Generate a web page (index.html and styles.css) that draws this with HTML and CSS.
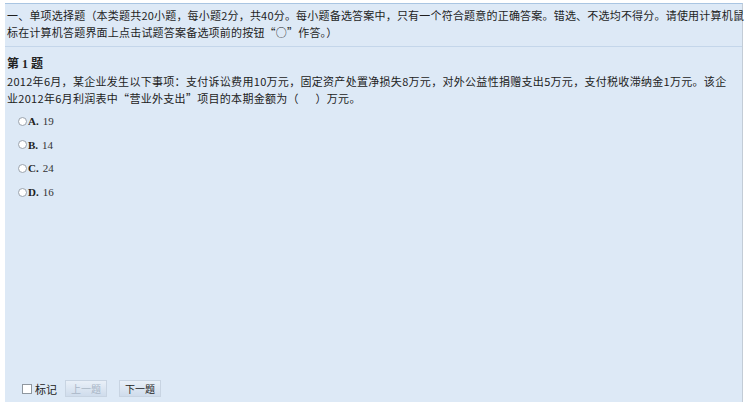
FILE: index.html
```html
<!DOCTYPE html>
<html lang="zh">
<head>
<meta charset="utf-8">
<link rel="stylesheet" href="styles.css">
</head>
<body>
<div class="panel">
  <div class="header">一、单项选择题（本类题共20小题，每小题2分，共40分。每小题备选答案中，只有一个符合题意的正确答案。错选、不选均不得分。请使用计算机鼠<br>标在计算机答题界面上点击试题答案备选项前的按钮“○”作答。）</div>
  <div class="question">
    <div class="qtitle">第<span class="num">1</span>题</div>
    <div class="qtext">2012年6月，某企业发生以下事项：支付诉讼费用10万元，固定资产处置净损失8万元，对外公益性捐赠支出5万元，支付税收滞纳金1万元。该企<br>业2012年6月利润表中“营业外支出”项目的本期金额为（&nbsp;&nbsp;&nbsp;&nbsp;&nbsp;&nbsp;）万元。</div>
    <div class="options">
      <div class="opt"><span class="radio"></span><b>A.</b> 19</div>
      <div class="opt"><span class="radio"></span><b>B.</b> 14</div>
      <div class="opt"><span class="radio"></span><b>C.</b> 24</div>
      <div class="opt"><span class="radio"></span><b>D.</b> 16</div>
    </div>
  </div>
  <div class="footer">
    <span class="check"></span><span class="mark">标记</span>
    <span class="btn disabled">上一题</span>
    <span class="btn">下一题</span>
  </div>
</div>
</body>
</html>
```
FILE: styles.css
```css
html, body {
  margin: 0;
  padding: 0;
  background: #ffffff;
}
body {
  font-family: "Noto Sans CJK SC", "Liberation Sans", sans-serif;
  color: #222;
}
.panel {
  margin: 3px 3px 0 5px;
  height: 399px;
  background: #dde9f6;
  border-top: 1px solid #a9c5e2;
  border-right: 1px solid #c3ccd6;
  display: flex;
  flex-direction: column;
  box-sizing: border-box;
}
.header {
  font-size: 11px;
  line-height: 17px;
  padding: 3px 2px 5px 2px;
  border-bottom: 1px solid #c4d6ea;
  letter-spacing: 0.2px;
  white-space: nowrap;
  color: #1e1e1e;
}
.question {
  padding: 9px 2px 0 2px;
}
.qtitle {
  font-family: "Liberation Serif", "Noto Sans CJK SC", serif;
  font-weight: bold;
  font-size: 12px;
  line-height: 17px;
}
.qtitle .num {
  margin: 0 3px;
}
.qtext {
  font-family: "Noto Sans CJK SC", "Liberation Serif", serif;
  font-size: 11px;
  line-height: 17px;
  letter-spacing: 0.3px;
  white-space: nowrap;
}
.options {
  margin-top: 7px;
  padding-left: 11px;
  display: flex;
  flex-direction: column;
  gap: 9.7px;
}
.opt {
  font-family: "Liberation Serif", serif;
  font-size: 11px;
  line-height: 14px;
  display: flex;
  align-items: center;
  color: #333;
}
.opt b {
  margin-right: 4px;
  color: #222;
}
.radio {
  width: 7px;
  height: 7px;
  border: 1px solid #9aa3ad;
  border-radius: 50%;
  background: #fff;
  margin-right: 1px;
}
.footer {
  margin-top: auto;
  padding: 0 0 5px 17px;
  display: flex;
  align-items: center;
  font-size: 11px;
}
.check {
  width: 8px;
  height: 8px;
  border: 1px solid #8f979f;
  background: #fff;
  margin-right: 3px;
}
.mark {
  margin-right: 8px;
}
.btn {
  display: inline-block;
  width: 40px;
  height: 15px;
  line-height: 15px;
  text-align: center;
  font-size: 10px;
  background: linear-gradient(#e9f0f8, #cfdcec);
  border: 1px solid #c8d4e2;
  color: #222;
  margin-right: 12px;
}
.btn.disabled {
  color: #a9b6c6;
}
```
